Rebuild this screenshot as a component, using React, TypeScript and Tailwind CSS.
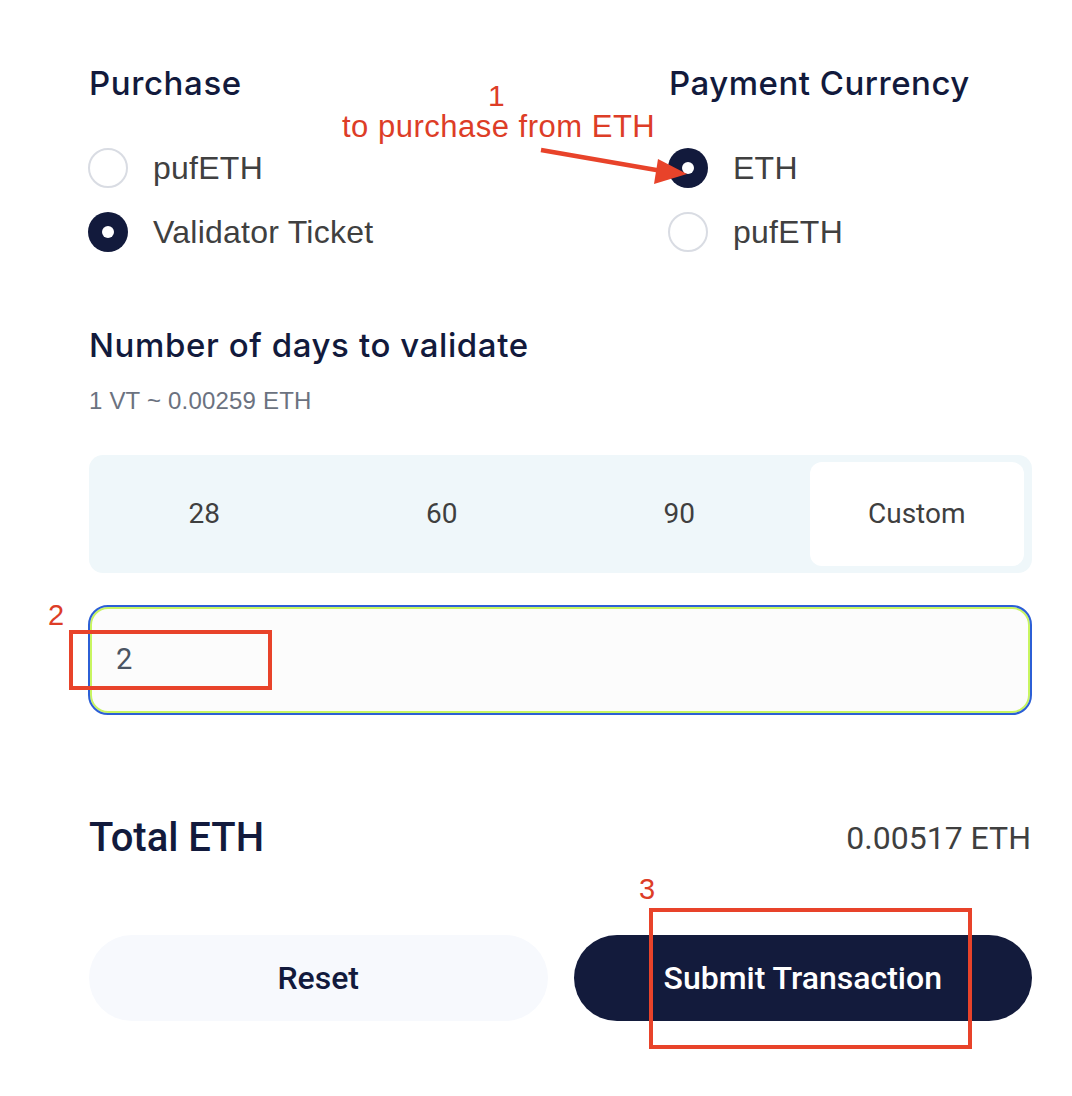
import React from "react";

function Radio({ checked, label }: { checked: boolean; label: string }) {
  return (
    <div className="flex items-center h-[40px]">
      {checked ? (
        <div className="w-[40px] h-[40px] rounded-full bg-[#121a3c] flex items-center justify-center">
          <div className="w-[12px] h-[12px] rounded-full bg-white" />
        </div>
      ) : (
        <div className="w-[40px] h-[40px] rounded-full border-2 border-[#d9dce3] bg-white" />
      )}
      <span
        className="ml-[25px] text-[32px] leading-[40px] text-[#404040] tracking-[0.25px]"
        style={{ fontFamily: '"Liberation Sans", Arial, sans-serif' }}
      >
        {label}
      </span>
    </div>
  );
}

export default function App() {
  const heading = { fontFamily: "Inter, sans-serif" } as React.CSSProperties;
  const roboto = { fontFamily: "Roboto, sans-serif" } as React.CSSProperties;
  const arial = { fontFamily: '"Liberation Sans", Arial, sans-serif' } as React.CSSProperties;

  return (
    <div className="relative w-[1072px] h-[1096px] bg-white overflow-hidden">
      <div className="pt-[63px] pl-[89px] w-[1032px]">
        <div className="flex">
          <div className="w-[580px]">
            <h2 className="text-[33px] leading-[40px] font-medium text-[#121a3c] tracking-[0.6px]" style={heading}>
              Purchase
            </h2>
            <div className="mt-[45px] flex flex-col gap-[24px] -ml-[1px]">
              <Radio checked={false} label="pufETH" />
              <Radio checked={true} label="Validator Ticket" />
            </div>
          </div>
          <div>
            <h2 className="text-[33px] leading-[40px] font-medium text-[#121a3c] tracking-[0.5px]" style={heading}>
              Payment Currency
            </h2>
            <div className="mt-[45px] flex flex-col gap-[24px] -ml-[1px]">
              <Radio checked={true} label="ETH" />
              <Radio checked={false} label="pufETH" />
            </div>
          </div>
        </div>

        <h2 className="mt-[73px] text-[33px] leading-[40px] font-medium text-[#121a3c] tracking-[0.6px]" style={heading}>
          Number of days to validate
        </h2>
        <p className="mt-[22px] text-[24px] leading-[28px] text-[#6b7280] tracking-[0.2px]" style={arial}>
          1 VT ~ 0.00259 ETH
        </p>

        <div className="mt-[40px] h-[118px] w-[943px] rounded-[14px] bg-[#eff7fa] px-[8px] py-[7px] grid grid-cols-4 gap-[23px]">
          {["28", "60", "90", "Custom"].map((t) => (
            <div
              key={t}
              className={
                "flex items-center justify-center rounded-[12px] text-[28px] text-[#3f3f3f] " +
                (t === "Custom" ? "bg-white" : "")
              }
              style={roboto}
            >
              {t}
            </div>
          ))}
        </div>

        <div className="mt-[32px] h-[110px] w-[944px] -ml-[1px] rounded-[20px] border-2 border-[#2c5fd6] bg-[#fcfcfc] shadow-[inset_0_0_0_2px_#c8f560] flex items-center pl-[26px]">
          <span className="text-[29px] text-[#4b5563]" style={roboto}>
            2
          </span>
        </div>

        <div className="mt-[99px] flex items-center justify-between w-[943px] h-[48px]">
          <span className="text-[40px] font-medium text-[#121a3c]" style={roboto}>
            Total ETH
          </span>
          <span className="text-[32px] text-[#3f3f3f] mr-[1px]" style={roboto}>
            0.00517 ETH
          </span>
        </div>

        <div className="mt-[73px] grid grid-cols-2 gap-[26px] w-[943px]">
          <button
            className="h-[86px] rounded-full bg-[#f7f9fd] text-[32px] font-medium text-[#121a3c]"
            style={roboto}
          >
            Reset
          </button>
          <button
            className="h-[86px] rounded-full bg-[#131b3c] text-[32px] font-medium text-white"
            style={roboto}
          >
            Submit Transaction
          </button>
        </div>
      </div>

      {/* Annotation 1 */}
      <div
        className="absolute left-[488px] top-[79px] text-[30px] leading-[34px] text-[#dd3d27]"
        style={arial}
      >
        1
      </div>
      <div
        className="absolute left-[342px] top-[110px] text-[31px] leading-[34px] text-[#dd3d27] whitespace-nowrap tracking-[0.5px]"
        style={arial}
      >
        to purchase from ETH
      </div>
      <svg className="absolute left-[530px] top-[140px]" width="170" height="50" viewBox="0 0 170 50">
        <line x1="11" y1="10" x2="132" y2="31" stroke="#e8432a" strokeWidth="4.5" strokeLinecap="butt" />
        <polygon points="157,34 128,19 124,44" fill="#e8432a" />
      </svg>

      {/* Annotation 2 */}
      <div
        className="absolute left-[48px] top-[598px] text-[29px] leading-[34px] text-[#dd3d27]"
        style={arial}
      >
        2
      </div>
      <div className="absolute left-[69px] top-[630px] w-[203px] h-[60px] border-[4px] border-[#e8432a]" />

      {/* Annotation 3 */}
      <div
        className="absolute left-[639px] top-[872px] text-[29px] leading-[34px] text-[#dd3d27]"
        style={arial}
      >
        3
      </div>
      <div className="absolute left-[649px] top-[908px] w-[323px] h-[141px] border-[4px] border-[#e8432a]" />
    </div>
  );
}
